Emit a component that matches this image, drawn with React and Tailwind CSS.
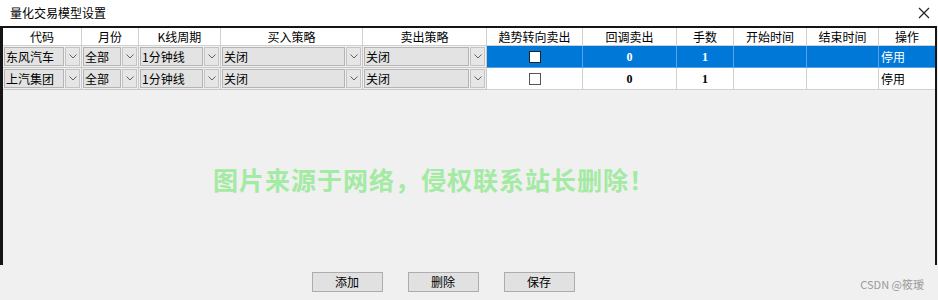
import React from 'react';

const FONT = { fontFamily: '"Noto Sans CJK SC", "Noto Sans", sans-serif' };

const cols = [
    { key: 'code', title: '代码', w: 'w-[79px]' },
    { key: 'month', title: '月份', w: 'w-[57px]' },
    { key: 'period', title: 'K线周期', w: 'w-[82px]' },
    { key: 'buy', title: '买入策略', w: 'w-[142px]' },
    { key: 'sell', title: '卖出策略', w: 'w-[124px]' },
    { key: 'trend', title: '趋势转向卖出', w: 'w-[96px]' },
    { key: 'pull', title: '回调卖出', w: 'w-[94px]' },
    { key: 'lots', title: '手数', w: 'w-[57px]' },
    { key: 'start', title: '开始时间', w: 'w-[73px]' },
    { key: 'end', title: '结束时间', w: 'w-[72px]' },
    { key: 'op', title: '操作', w: 'w-[56px]' },
];

const rows = [
    { code: '东风汽车', month: '全部', period: '1分钟线', buy: '关闭', sell: '关闭', pull: '0', lots: '1', op: '停用', selected: true },
    { code: '上汽集团', month: '全部', period: '1分钟线', buy: '关闭', sell: '关闭', pull: '0', lots: '1', op: '停用', selected: false },
];

function Chevron() {
    return (
        <svg width="8" height="5" viewBox="0 0 8 5" fill="none">
            <path d="M0.5 0.5 L4 4 L7.5 0.5" stroke="#606060" strokeWidth="1" />
        </svg>
    );
}

function Combo({ value, w }) {
    return (
        <div className={`${w} h-full flex shrink-0 p-[1px] border-r border-b border-[#c8c8c8] bg-[#f0f0f0]`}>
            <div className="flex-1 flex items-center bg-[#e3e3e3] border border-[#b4b4b4] px-[1px] text-[12px] text-black leading-none overflow-hidden whitespace-nowrap">
                {value}
            </div>
            <div className="w-[15px] ml-[1px] flex items-center justify-center bg-[#e6e6e6] border border-[#c4c4c4]">
                <Chevron />
            </div>
        </div>
    );
}

function Cell({ w, sel, children, center = true, last = false }) {
    return (
        <div
            className={`${w} h-full shrink-0 flex items-center ${center ? 'justify-center' : 'pl-[2px]'} border-b ${last ? '' : 'border-r'} text-[12px] leading-none ${
                sel ? 'bg-[#0078d7] text-white border-[#5aa3e3]' : 'bg-white text-black border-[#d0d0d0]'
            }`}
        >
            {children}
        </div>
    );
}

export default function App() {
    return (
        <div className="w-[938px] h-[300px] bg-[#f0f0f0] flex flex-col relative overflow-hidden" style={FONT}>
            <div className="h-[26px] bg-white flex items-center justify-between pl-[10px] pr-[8px]">
                <span className="text-[12px] text-black">量化交易模型设置</span>
                <svg width="12" height="12" viewBox="0 0 12 12">
                    <path d="M1 1 L11 11 M11 1 L1 11" stroke="#222" strokeWidth="1.2" />
                </svg>
            </div>

            <div className="h-[239px] w-[937px] border-l-[3px] border-r-2 border-t-2 border-[#151515] bg-[#f0f0f0] flex flex-col">
                <div className="h-[18px] flex bg-white">
                    {cols.map((c, i) => (
                        <div
                            key={c.key}
                            className={`${c.w} shrink-0 h-full flex items-center justify-center text-[12px] text-black border-b border-[#d0d0d0] ${i < cols.length - 1 ? 'border-r' : ''}`}
                        >
                            {c.title}
                        </div>
                    ))}
                </div>

                {rows.map((r) => (
                    <div key={r.code} className="h-[22px] flex">
                        <Combo value={r.code} w="w-[79px]" />
                        <Combo value={r.month} w="w-[57px]" />
                        <Combo value={r.period} w="w-[82px]" />
                        <Combo value={r.buy} w="w-[142px]" />
                        <Combo value={r.sell} w="w-[124px]" />
                        <Cell w="w-[96px]" sel={r.selected}>
                            <span className={`w-[12px] h-[12px] bg-white border ${r.selected ? 'border-[#222]' : 'border-[#555]'}`} />
                        </Cell>
                        <Cell w="w-[94px]" sel={r.selected}>
                            <span className="font-bold text-[12px]" style={{ fontFamily: '"Liberation Serif", serif' }}>{r.pull}</span>
                        </Cell>
                        <Cell w="w-[57px]" sel={r.selected}>
                            <span className="font-bold text-[12px]" style={{ fontFamily: '"Liberation Serif", serif' }}>{r.lots}</span>
                        </Cell>
                        <Cell w="w-[73px]" sel={r.selected} />
                        <Cell w="w-[72px]" sel={r.selected} />
                        <Cell w="w-[56px]" sel={r.selected} center={false} last>
                            {r.op}
                        </Cell>
                    </div>
                ))}
            </div>

            <div className="flex-1 flex items-start justify-center gap-[25px] pt-[7px] pr-[52px]">
                {['添加', '删除', '保存'].map((b) => (
                    <button
                        key={b}
                        className="w-[71px] h-[20px] bg-[#e1e1e1] border border-[#adadad] text-[12px] text-black leading-none flex items-center justify-center"
                    >
                        {b}
                    </button>
                ))}
            </div>

            <div className="absolute left-[213px] top-[167px] text-[25px] font-bold text-[#a3eaa3] tracking-[1px] whitespace-nowrap leading-none">
                图片来源于网络，侵权联系站长删除！
            </div>
            <div className="absolute right-[14px] bottom-[10px] text-[11px] text-[#9a9a9a] whitespace-nowrap leading-none">
                CSDN @筱瑷
            </div>
        </div>
    );
}
